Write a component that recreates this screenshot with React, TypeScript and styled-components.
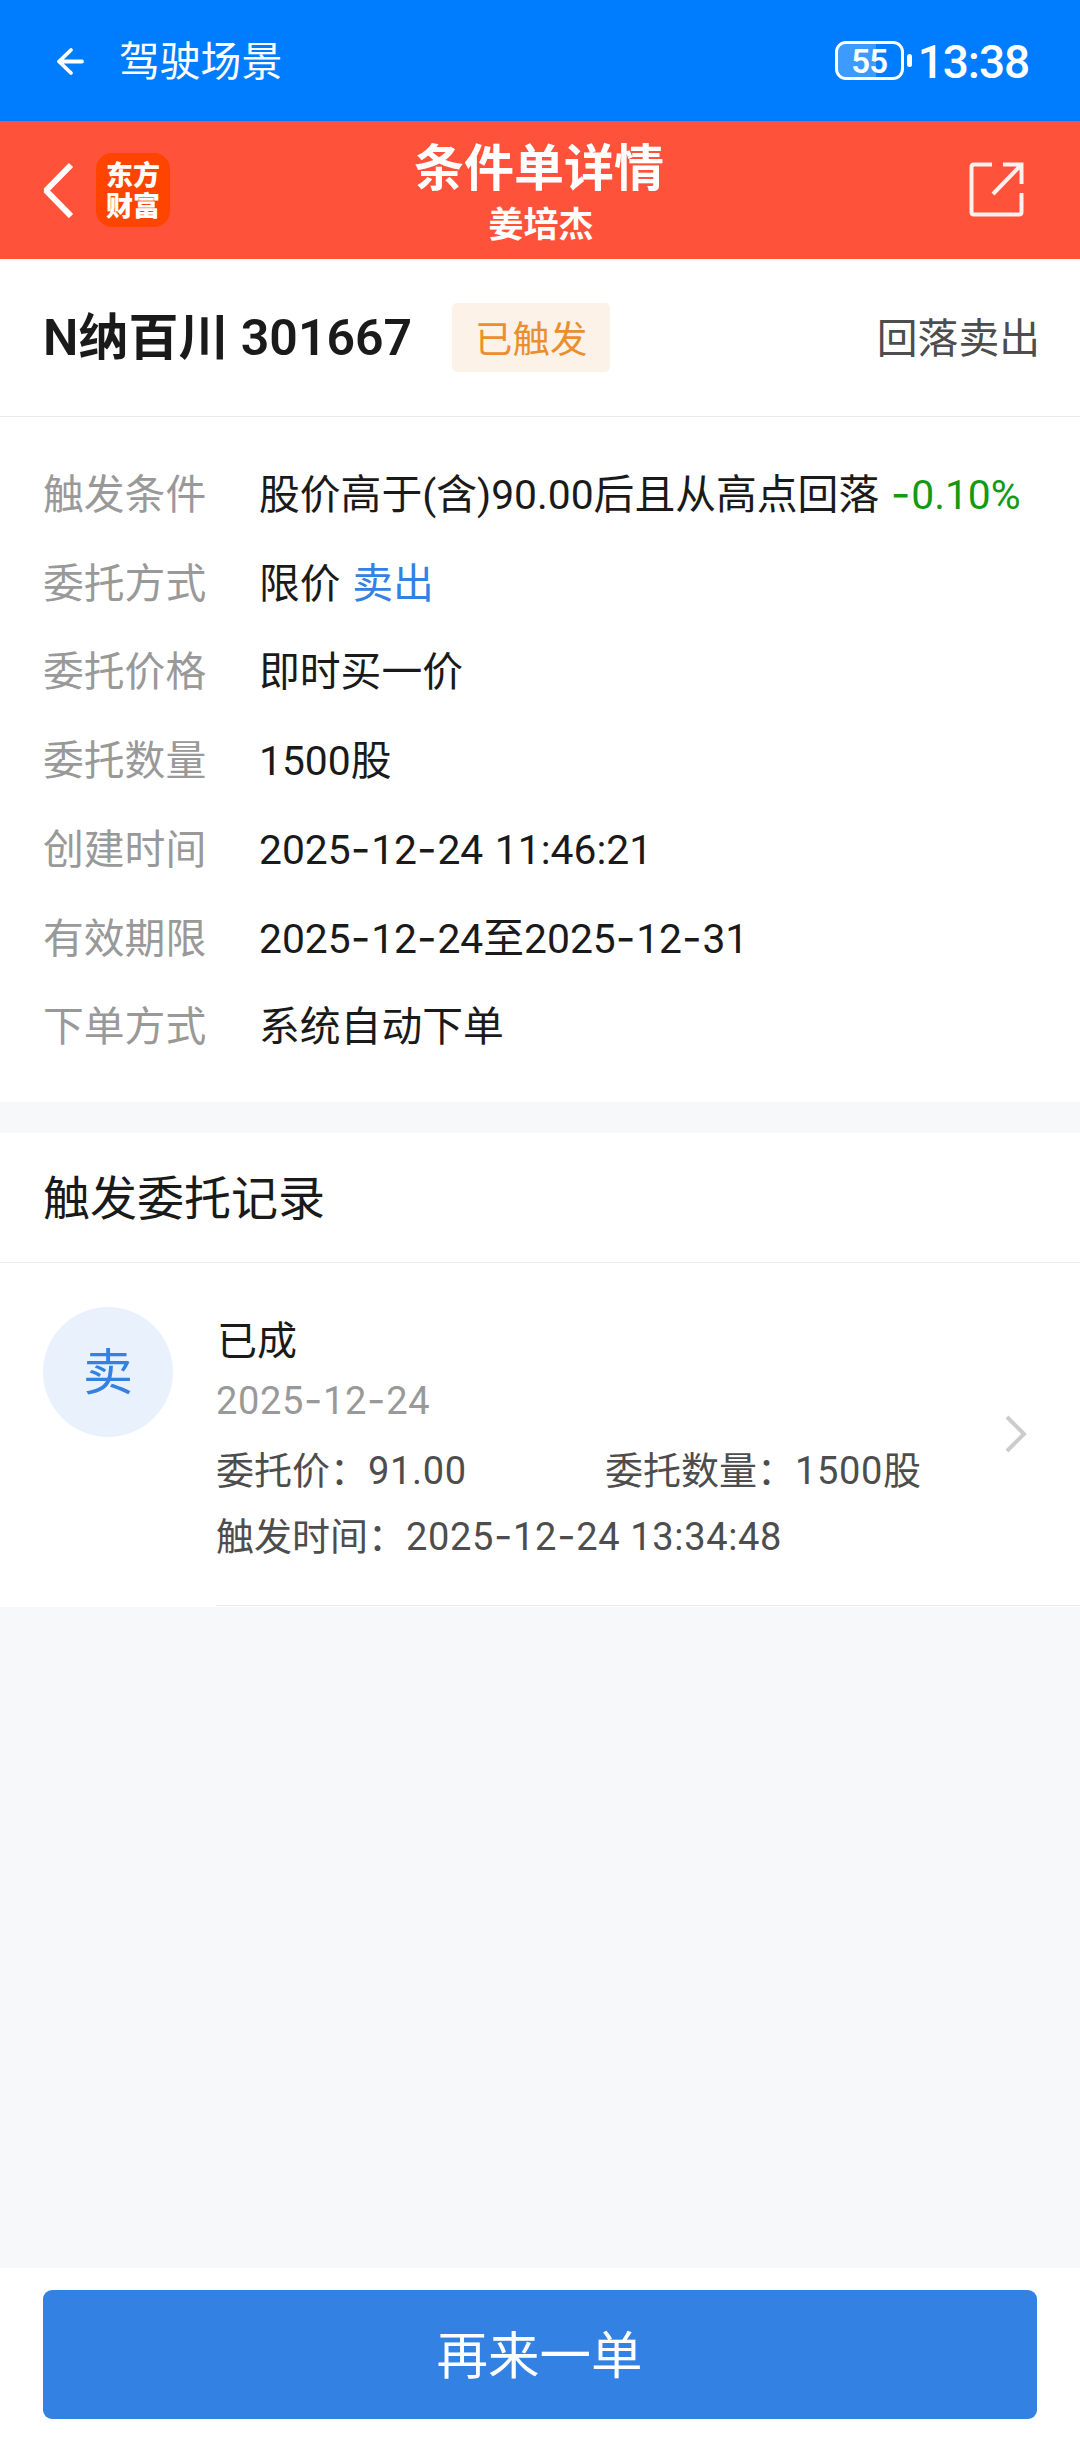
import React from "react";
import styled, { createGlobalStyle } from "styled-components";

const GlobalStyle = createGlobalStyle`
  * { box-sizing: border-box; }
  body {
    margin: 0;
    background: #f7f8fa;
    font-family: Roboto, "Noto Sans CJK SC", sans-serif;
    color: #1a1a1a;
  }
`;

const Screen = styled.div`
  width: 1080px;
  height: 2440px;
  display: flex;
  flex-direction: column;
  background: #f7f8fa;
`;

const StatusBar = styled.header`
  height: 121px;
  flex: none;
  display: flex;
  align-items: center;
  justify-content: space-between;
  padding: 0 51px 0 56px;
  background: #007dff;
  color: #fff;
`;

const Scene = styled.div`
  display: flex;
  align-items: center;
  gap: 33px;
  font-size: 40.8px;
  line-height: 50px;
  padding-top: 2px;
`;

const StatusRight = styled.div`
  display: flex;
  align-items: center;
  gap: 6px;
`;

const Battery = styled.div`
  display: flex;
  align-items: center;
  gap: 3px;
`;

const BatteryShell = styled.div<{ $level: number }>`
  width: 69px;
  height: 39px;
  display: flex;
  align-items: center;
  justify-content: center;
  border: 3px solid #fff;
  border-radius: 11px;
  background: linear-gradient(
      to right,
      #3d9bff ${(p) => p.$level + 5}%,
      transparent ${(p) => p.$level + 5}%
    )
    padding-box;
  font-size: 33px;
  font-weight: 600;
  line-height: 33px;
  letter-spacing: -0.9px;
  padding-top: 1px;
`;

const BatteryTip = styled.div`
  width: 5px;
  height: 13px;
  border-radius: 3px;
  background: #fff;
`;

const Clock = styled.div`
  font-size: 46px;
  font-weight: 500;
  line-height: 50px;
  letter-spacing: -1.1px;
  padding-top: 2px;
`;

const NavBar = styled.nav`
  height: 138px;
  flex: none;
  display: grid;
  grid-template-columns: 1fr auto 1fr;
  align-items: center;
  padding: 0 55px 0 41px;
  background: #ff523b;
  color: #fff;
`;

const NavLeft = styled.div`
  display: flex;
  align-items: center;
  gap: 21px;
`;

const NavRight = styled.div`
  display: flex;
  justify-content: flex-end;
`;

const Logo = styled.div`
  width: 74px;
  height: 74px;
  padding: 5px 9px 0 10px;
  border-radius: 16px;
  background: #ff4400;
  font-family: "Noto Sans CJK SC", sans-serif;
  font-size: 27px;
  font-weight: 800;
  line-height: 31px;
  word-break: break-all;
`;

const NavTitles = styled.div`
  padding: 10px 0 0 14px;
  text-align: center;
  font-weight: 700;
`;

const NavTitle = styled.h1`
  margin: 0 2px 0 0;
  font-size: 50px;
  line-height: 60px;
`;

const NavSubtitle = styled.div`
  padding-left: 2px;
  font-size: 35px;
  line-height: 53px;
`;

const StockRow = styled.section`
  height: 158px;
  flex: none;
  display: flex;
  align-items: center;
  padding: 0 40px 0 43px;
  background: #fff;
  border-bottom: 1px solid #ebebeb;
`;

const StockName = styled.h2`
  margin: 0;
  font-size: 50px;
  font-weight: 600;
  line-height: 60px;
  white-space: pre;
`;

const Badge = styled.span`
  width: 158px;
  height: 69px;
  margin-left: 40px;
  padding-bottom: 2px;
  display: flex;
  align-items: center;
  justify-content: center;
  border-radius: 5px;
  background: #fdf2e7;
  color: #ea8f30;
  font-size: 37.4px;
`;

const Strategy = styled.span`
  margin-left: auto;
  padding-bottom: 4px;
  color: #4d4d4d;
  font-size: 40.8px;
`;

const Details = styled.dl`
  margin: 0 0 31px;
  height: 685px;
  flex: none;
  padding: 34px 0 0 43px;
  background: #fff;
  font-size: 40.8px;
  line-height: 88.7px;
  word-spacing: 1.5px;
`;

const DetailRow = styled.div`
  display: grid;
  grid-template-columns: 216px 1fr;
  white-space: pre;
`;

const Label = styled.dt`
  color: #999;
`;

const Value = styled.dd`
  margin: 0;
`;

const Tint = styled.span<{ $color: string }>`
  color: ${(p) => p.$color};
`;

const Dash = styled.span`
  font-family: Inter, sans-serif;
  font-size: 1.05em;
  line-height: 0;
  letter-spacing: 0.7px;
`;

const SectionTitle = styled.h3`
  margin: 0;
  height: 130px;
  flex: none;
  padding-left: 43px;
  background: #fff;
  border-bottom: 1px solid #ebebeb;
  font-size: 47px;
  font-weight: 400;
  line-height: 131px;
`;

const Record = styled.section`
  height: 344px;
  flex: none;
  display: flex;
  padding: 0 0 1px 43px;
  background: #fff;
`;

const Side = styled.div`
  width: 130px;
  height: 130px;
  margin-top: 44px;
  border-radius: 50%;
  background: #e9f2fc;
  color: #3381e3;
  font-size: 50px;
  line-height: 132px;
  text-align: center;
`;

const RecordBody = styled.div`
  flex: 1;
  margin-left: 43px;
  display: flex;
  align-items: center;
  justify-content: space-between;
  padding-right: 52px;
  border-bottom: 1px solid #ebebeb;
`;

const RecordText = styled.div`
  align-self: flex-start;
  padding-top: 48px;
  color: #4d4d4d;
  font-size: 38px;
`;

const RecordStatus = styled.div`
  padding-left: 1px;
  color: #1a1a1a;
  font-size: 40px;
  line-height: 62px;
`;

const RecordDate = styled.div`
  color: #999;
  line-height: 57px;
  letter-spacing: 0.65px;
`;

const RecordLine = styled.div<{ $height: number }>`
  display: grid;
  grid-template-columns: 389px auto;
  line-height: ${(p) => p.$height}px;
`;

const WideLine = styled.div`
  line-height: 51px;
`;

const Num = styled.span`
  letter-spacing: 0.65px;
`;

const Footer = styled.footer`
  height: 172px;
  flex: none;
  margin-top: auto;
  padding: 22px 43px 0;
  background: #fff;
`;

const AgainButton = styled.button`
  display: block;
  width: 100%;
  height: 129px;
  padding: 0 1px 6px 0;
  border: 0;
  border-radius: 9px;
  background: #3381e3;
  color: #fff;
  font: inherit;
  font-size: 51.5px;
`;

const Dashed = ({ text }: { text: string }) => (
  <>
    {text.split("-").map((part, i) => (
      <React.Fragment key={i}>
        {i > 0 && <Dash>-</Dash>}
        {part}
      </React.Fragment>
    ))}
  </>
);

const details: { label: string; value: string; extra?: string; color?: string }[] = [
  { label: "触发条件", value: "股价高于(含)90.00后且从高点回落", extra: "-0.10%", color: "#139913" },
  { label: "委托方式", value: "限价", extra: "卖出", color: "#3381e3" },
  { label: "委托价格", value: "即时买一价" },
  { label: "委托数量", value: "1500股" },
  { label: "创建时间", value: "2025-12-24 11:46:21" },
  { label: "有效期限", value: "2025-12-24至2025-12-31" },
  { label: "下单方式", value: "系统自动下单" },
];

export default function App() {
  return (
    <>
      <GlobalStyle />
      <Screen>
        <StatusBar>
          <Scene>
            <svg width="30" height="30" viewBox="0 0 30 30" fill="none" stroke="#fff" strokeWidth="3.8" strokeLinecap="round" strokeLinejoin="round">
              <path d="M15 3 3 14.500 15 26M3 14.500H26" />
            </svg>
            驾驶场景
          </Scene>
          <StatusRight>
            <Battery>
              <BatteryShell $level={55}>55</BatteryShell>
              <BatteryTip />
            </Battery>
            <Clock>13:38</Clock>
          </StatusRight>
        </StatusBar>

        <NavBar>
          <NavLeft>
            <svg width="34" height="56" viewBox="0 0 34 56" fill="none" stroke="#fff" strokeWidth="6">
              <path d="M30 3 5 28.500 30 54" strokeLinejoin="bevel" />
            </svg>
            <Logo>东方财富</Logo>
          </NavLeft>
          <NavTitles>
            <NavTitle>条件单详情</NavTitle>
            <NavSubtitle>姜培杰</NavSubtitle>
          </NavTitles>
          <NavRight>
            <svg width="56" height="56" viewBox="0 0 56 56" fill="none" stroke="#fff" strokeOpacity="0.92" strokeWidth="4">
              <path d="M23 2.500H5Q2.500 2.500 2.500 5V50Q2.500 52.500 5 52.500H50Q52.500 52.500 52.500 50V31" />
              <path d="M34 2.500H52.500V22M52.500 2.500 24 32" />
            </svg>
          </NavRight>
        </NavBar>

        <StockRow>
          <StockName>N纳百川 301667</StockName>
          <Badge>已触发</Badge>
          <Strategy>回落卖出</Strategy>
        </StockRow>

        <Details>
          {details.map((d) => (
            <DetailRow key={d.label}>
              <Label>{d.label}</Label>
              <Value>
                <Dashed text={d.value} />
                {d.extra && (
                  <>
                    {" "}
                    <Tint $color={d.color!}>
                      <Dashed text={d.extra} />
                    </Tint>
                  </>
                )}
              </Value>
            </DetailRow>
          ))}
        </Details>

        <SectionTitle>触发委托记录</SectionTitle>
        <Record>
          <Side>卖</Side>
          <RecordBody>
            <RecordText>
              <RecordStatus>已成</RecordStatus>
              <RecordDate>
                <Dashed text="2025-12-24" />
              </RecordDate>
              <RecordLine $height={82}>
                <span>
                  委托价：<Num>91.00</Num>
                </span>
                <span>
                  委托数量：<Num>1500</Num>股
                </span>
              </RecordLine>
              <WideLine>
                触发时间：
                <Num>
                  <Dashed text="2025-12-24 13:34:48" />
                </Num>
              </WideLine>
            </RecordText>
            <svg width="24" height="40" viewBox="0 0 24 40" fill="none" stroke="#ccc" strokeWidth="4">
              <path d="M3 3 20 20 3 37" />
            </svg>
          </RecordBody>
        </Record>

        <Footer>
          <AgainButton>再来一单</AgainButton>
        </Footer>
      </Screen>
    </>
  );
}
